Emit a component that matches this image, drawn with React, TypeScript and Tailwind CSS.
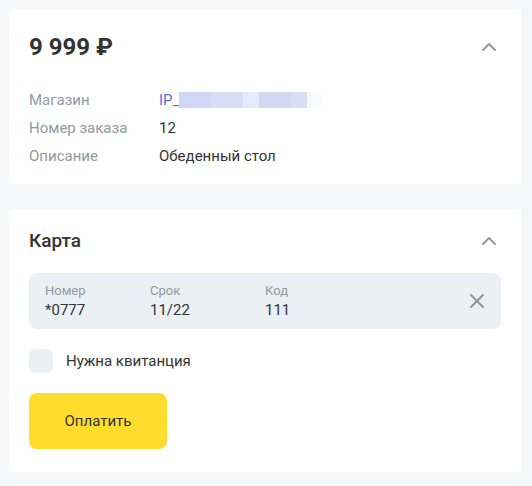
import { ChevronUp, X } from 'lucide-react';

const font = { fontFamily: 'Roboto, "Noto Sans", sans-serif' };

function InfoRow({ label, children }: { label: string; children: React.ReactNode }) {
  return (
    <div className="flex h-7 items-center text-[15px]">
      <span className="w-[130px] text-[#9299a2]">{label}</span>
      <span className="text-[#333333]">{children}</span>
    </div>
  );
}

export default function App() {
  return (
    <div className="min-h-screen bg-[#f5f6f7] pt-[9px] pb-[13px]" style={font}>
      <div className="ml-[9px] w-[512px] flex flex-col gap-[25px]">
        {/* Order */}
        <section className="bg-white px-5 pt-[22px] pb-[14px]">
          <div className="flex h-8 items-center justify-between">
            <h1 className="text-[24px] font-bold leading-8 text-[#333333]">9 999 ₽</h1>
            <ChevronUp className="h-6 w-6 text-[#9299a2]" strokeWidth={2} />
          </div>
          <div className="mt-[23px]">
            <InfoRow label="Магазин">
              <span className="flex items-center">
                <span className="text-[#5b6ee6]">IP_</span>
                <span className="flex h-4">
                  <span className="w-[32px] bg-[#d0d7f6]" />
                  <span className="w-[32px] bg-[#d7ddf7]" />
                  <span className="w-[16px] bg-[#e6eafb]" />
                  <span className="w-[32px] bg-[#d2d9f5]" />
                  <span className="w-[16px] bg-[#d8ddf8]" />
                  <span className="w-[14px] bg-[#f9faff]" />
                </span>
              </span>
            </InfoRow>
            <InfoRow label="Номер заказа">12</InfoRow>
            <InfoRow label="Описание">Обеденный стол</InfoRow>
          </div>
        </section>

        {/* Card */}
        <section className="bg-white px-5 pt-[18px] pb-[23px]">
          <div className="flex h-7 items-center justify-between">
            <h2 className="text-[19px] font-medium text-[#333333]">Карта</h2>
            <ChevronUp className="h-6 w-6 text-[#9299a2]" strokeWidth={2} />
          </div>

          <div className="mt-[18px] flex h-14 items-center rounded-lg bg-[#ebf0f6] pl-4 pr-3">
            <div className="w-[105px]">
              <div className="text-[13px] leading-[18px] text-[#9299a2]">Номер</div>
              <div className="text-[15px] leading-5 text-[#333333]">*0777</div>
            </div>
            <div className="w-[115px]">
              <div className="text-[13px] leading-[18px] text-[#9299a2]">Срок</div>
              <div className="text-[15px] leading-5 text-[#333333]">11/22</div>
            </div>
            <div className="flex-1">
              <div className="text-[13px] leading-[18px] text-[#9299a2]">Код</div>
              <div className="text-[15px] leading-5 text-[#333333]">111</div>
            </div>
            <X className="h-6 w-6 text-[#8d949c]" strokeWidth={2} />
          </div>

          <label className="mt-5 flex items-center gap-[13px]">
            <span className="h-6 w-6 rounded-md bg-[#ebf0f6]" />
            <span className="text-[15px] text-[#333333]">Нужна квитанция</span>
          </label>

          <button className="mt-5 h-14 w-[138px] rounded-lg bg-[#ffdd2d] text-[15px] text-[#333333]">
            Оплатить
          </button>
        </section>
      </div>
    </div>
  );
}
